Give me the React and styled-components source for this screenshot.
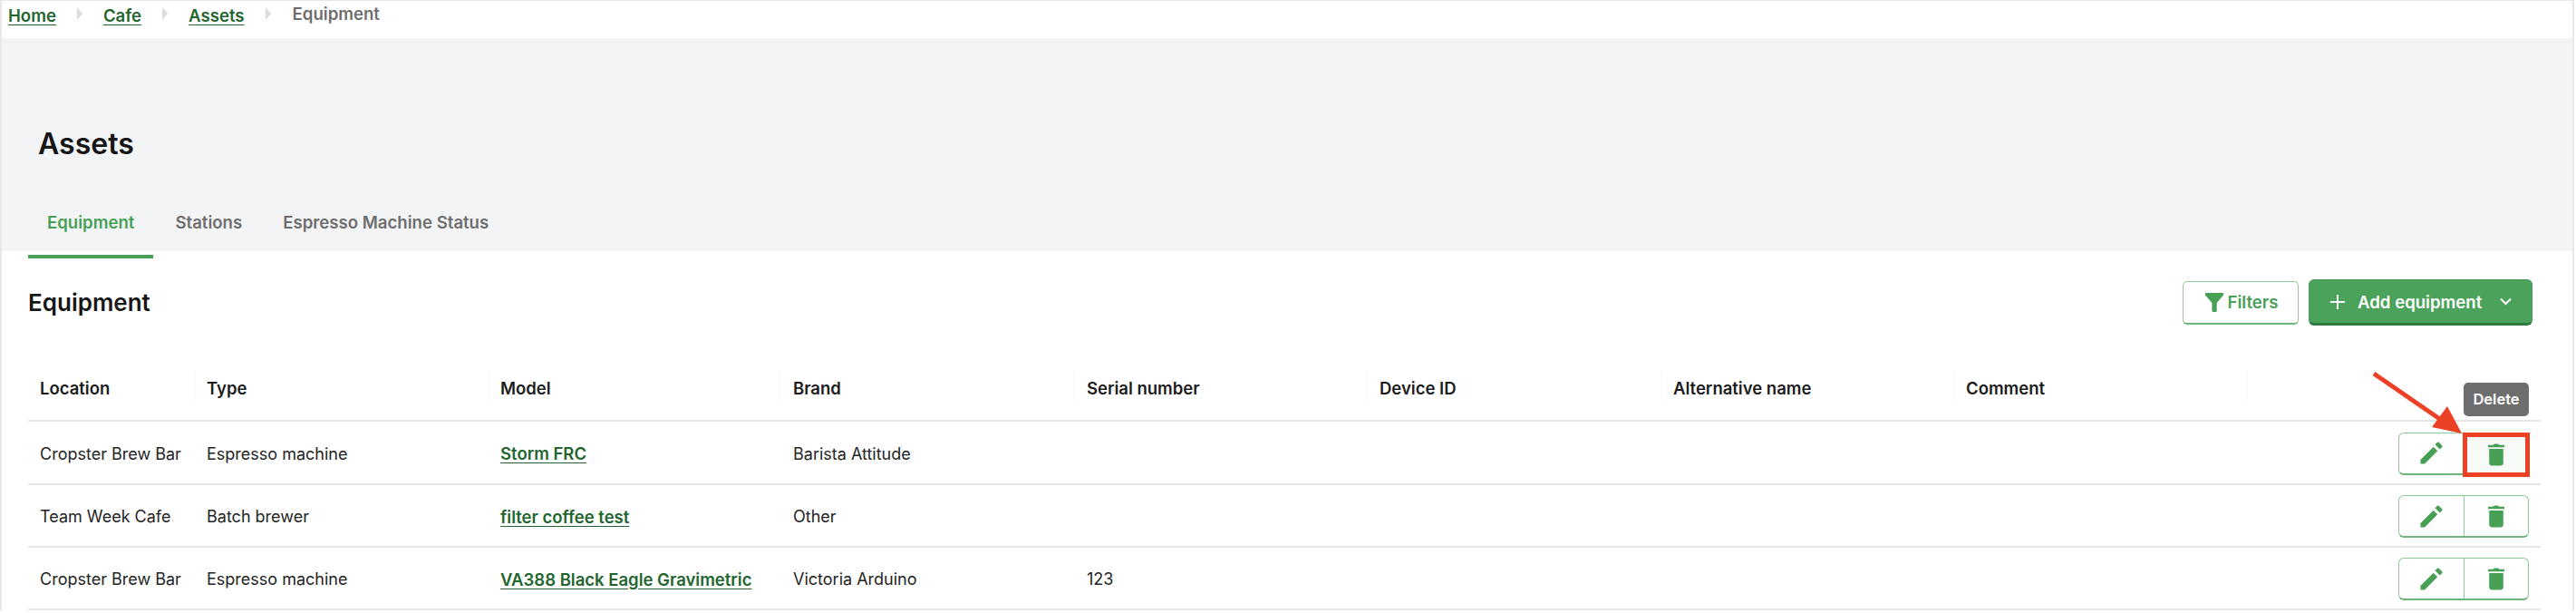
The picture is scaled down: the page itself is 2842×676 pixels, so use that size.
import styled, { createGlobalStyle } from "styled-components"

const GlobalStyle = createGlobalStyle`
  html, body {
    margin: 0;
    background: #fff;
  }
  * {
    box-sizing: border-box;
  }
`

const Page = styled.div`
  position: relative;
  width: 2842px;
  height: 676px;
  overflow: hidden;
  font-family: Inter, "Liberation Sans", sans-serif;
  color: #1c1c1c;
`

const Frame = styled.div`
  width: 2840px;
  height: 673px;
  border: 2px solid #e8e8e8;
  border-bottom: 0;
  border-top-width: 1px;
`

const Breadcrumbs = styled.nav`
  display: flex;
  align-items: center;
  height: 41px;
  padding: 0 0 9px 7px;
  font-size: 18.6px;
  font-weight: 600;
`

const Crumb = styled.a`
  color: #22652f;
  text-decoration: underline;
  text-underline-offset: 3px;
`

const CurrentCrumb = styled.span`
  color: #6e6e6e;
  margin: -4px 0 0 1px;
`

const CrumbArrow = styled.span`
  width: 0;
  height: 0;
  margin: -4px 23px 0;
  border-left: 6px solid #dcdcdc;
  border-top: 7px solid transparent;
  border-bottom: 7px solid transparent;
`

const Header = styled.header`
  height: 235px;
  padding: 93px 0 0 29px;
  background: #f3f4f6;
`

const Title = styled.h1`
  margin: 0 0 0 11px;
  font-size: 32px;
  line-height: 48px;
  font-weight: 600;
  color: #161616;
`

const Tabs = styled.div`
  display: flex;
  gap: 3px;
  margin-top: 32px;
`

const Tab = styled.div`
  height: 70px;
  padding: 0 21px;
  font-size: 18.6px;
  line-height: 60px;
  font-weight: 600;
  color: ${(p) => (p.$active ? "#47a056" : "#6e6e6e")};
  border-bottom: 4px solid ${(p) => (p.$active ? "#47a056" : "transparent")};
`

const Toolbar = styled.div`
  display: flex;
  align-items: center;
  justify-content: space-between;
  height: 113px;
  padding: 0 44px 0 29px;
`

const SectionTitle = styled.h2`
  margin: 0;
  font-size: 26px;
  font-weight: 600;
  color: #161616;
`

const Actions = styled.div`
  display: flex;
  align-items: center;
  gap: 11px;
`

const FilterButton = styled.button`
  display: flex;
  align-items: center;
  justify-content: center;
  gap: 5px;
  width: 128px;
  height: 48px;
  padding: 0 0 0 2px;
  font: 600 18.6px Inter, sans-serif;
  color: #47a056;
  background: #fff;
  border: 1px solid #8fc89a;
  border-bottom: 2px solid #6db57b;
  border-radius: 5px;
`

const AddButton = styled.button`
  display: flex;
  align-items: center;
  width: 247px;
  height: 51px;
  padding: 0 22px;
  font: 600 18.6px Inter, sans-serif;
  color: #fff;
  background: #4ba35b;
  border: 1px solid #47985a;
  border-bottom: 3px solid #2f7a3f;
  border-radius: 6px;
`

const AddLabel = styled.span`
  margin: 0 auto 0 13px;
`

const Table = styled.table`
  width: 2772px;
  margin-left: 29px;
  border-collapse: collapse;
  table-layout: fixed;
  font-size: 18px;
`

const HeadCell = styled.th`
  position: relative;
  height: 74px;
  padding: 3px 13px 0;
  text-align: left;
  font-size: 18.5px;
  font-weight: 600;
  color: #1c1c1c;
  border-bottom: 2px solid #e5e5e5;

  &::after {
    content: "";
    position: absolute;
    right: 0;
    top: 18px;
    height: 37px;
    border-right: 1px solid #fafafa;
  }
  &:last-child::after {
    display: none;
  }
`

const Cell = styled.td`
  height: ${(p) => p.$height}px;
  padding: 2px 13px 0;
  color: #242424;
  border-bottom: 2px solid #e5e5e5;
`

const ModelLink = styled.a`
  font-size: 18.5px;
  font-weight: 600;
  color: #22652f;
  text-decoration: underline;
  text-underline-offset: 3px;
`

const ButtonGroup = styled.div`
  display: flex;
  float: right;
  width: 144px;
  height: 47px;
  background: #fff;
  border: 1px solid #8fc89a;
  border-bottom: 2px solid #6db57b;
  border-radius: 6px;
`

const IconButton = styled.div`
  display: flex;
  flex: 1;
  align-items: center;
  justify-content: center;
  & + & {
    border-left: 1px solid #8fc89a;
  }
`

const Highlight = styled.div`
  position: absolute;
  left: 2717px;
  top: 477px;
  width: 74px;
  height: 49px;
  display: flex;
  align-items: center;
  justify-content: center;
  padding-right: 1px;
  background: #f7faf7;
  border: 5px solid #ec4125;
`

const Tooltip = styled.div`
  position: absolute;
  left: 2718px;
  top: 422px;
  width: 72px;
  height: 37px;
  font-size: 16.5px;
  font-weight: 600;
  line-height: 37px;
  text-align: center;
  color: #fff;
  background: #6e6e6e;
  border-radius: 5px;
`

const Arrow = styled.svg`
  position: absolute;
  left: 2610px;
  top: 405px;
`

const PencilIcon = () => (
  <svg width="29" height="29" viewBox="0 0 24 24" fill="#47a056">
    <path d="M2 18.2V22h3.8L17.6 10.2l-3.800-3.800L2 18.200z" />
    <path d="M21.700 6.600c.4-.4.4-1 0-1.400l-2.900-2.900c-.4-.4-1-.4-1.400 0l-2.100 2.100 4.300 4.300 2.100-2.100z" />
  </svg>
)

const TrashIcon = () => (
  <svg width="20" height="25" viewBox="0 0 20 25" fill="#47a056">
    <path d="M1 1.800h5.500C7 .8 8 .4 10 .4s3 .4 3.500 1.400H19v2.400H1z" />
    <path d="M2.200 6h15.600v15.500c0 2-1.300 3-3 3H5.200c-1.700 0-3-1-3-3z" />
  </svg>
)

const rows = [
  { location: "Cropster Brew Bar", type: "Espresso machine", model: "Storm FRC", brand: "Barista Attitude", serial: "", height: 70 },
  { location: "Team Week Cafe", type: "Batch brewer", model: "filter coffee test", brand: "Other", serial: "", height: 69 },
  { location: "Cropster Brew Bar", type: "Espresso machine", model: "VA388 Black Eagle Gravimetric", brand: "Victoria Arduino", serial: "123", height: 69 },
]

const columns = ["Location", "Type", "Model", "Brand", "Serial number", "Device ID", "Alternative name", "Comment"]
const widths = [184, 324, 323, 324, 323, 324, 323, 324, 323]

export default function App() {
  return (
    <Page>
      <GlobalStyle />
      <Frame>
        <Breadcrumbs>
          <Crumb>Home</Crumb>
          <CrumbArrow />
          <Crumb>Cafe</Crumb>
          <CrumbArrow />
          <Crumb>Assets</Crumb>
          <CrumbArrow />
          <CurrentCrumb>Equipment</CurrentCrumb>
        </Breadcrumbs>
        <Header>
          <Title>Assets</Title>
          <Tabs>
            <Tab $active>Equipment</Tab>
            <Tab>Stations</Tab>
            <Tab>Espresso Machine Status</Tab>
          </Tabs>
        </Header>
        <Toolbar>
          <SectionTitle>Equipment</SectionTitle>
          <Actions>
            <FilterButton>
              <svg width="20" height="21" viewBox="0 0 20 21" fill="#47a056">
                <path d="M0 0h20v2.500L12.700 11v8.500c0 1-.8 1.500-1.700 1.500H9.200c-1 0-1.800-.5-1.800-1.500V11L0 2.500z" />
              </svg>
              Filters
            </FilterButton>
            <AddButton>
              <svg width="18" height="18" viewBox="0 0 18 18" stroke="#fff" strokeWidth="2" fill="none">
                <path d="M9 1v16M1 9h16" />
              </svg>
              <AddLabel>Add equipment</AddLabel>
              <svg width="13" height="9" viewBox="0 0 13 9" stroke="#fff" strokeWidth="2" fill="none">
                <path d="M1 1.500l5.500 5.500 5.500-5.500" />
              </svg>
            </AddButton>
          </Actions>
        </Toolbar>
        <Table>
          <colgroup>
            {widths.map((w, i) => (
              <col key={i} width={w} />
            ))}
          </colgroup>
          <thead>
            <tr>
              {columns.map((c) => (
                <HeadCell key={c}>{c}</HeadCell>
              ))}
              <HeadCell />
            </tr>
          </thead>
          <tbody>
            {rows.map((r) => (
              <tr key={r.model}>
                <Cell $height={r.height}>{r.location}</Cell>
                <Cell $height={r.height}>{r.type}</Cell>
                <Cell $height={r.height}>
                  <ModelLink>{r.model}</ModelLink>
                </Cell>
                <Cell $height={r.height}>{r.brand}</Cell>
                <Cell $height={r.height}>{r.serial}</Cell>
                <Cell $height={r.height} />
                <Cell $height={r.height} />
                <Cell $height={r.height} />
                <Cell $height={r.height}>
                  <ButtonGroup>
                    <IconButton>
                      <PencilIcon />
                    </IconButton>
                    <IconButton>
                      <TrashIcon />
                    </IconButton>
                  </ButtonGroup>
                </Cell>
              </tr>
            ))}
          </tbody>
        </Table>
      </Frame>
      <Tooltip>Delete</Tooltip>
      <Highlight>
        <TrashIcon />
      </Highlight>
      <Arrow width="120" height="85" viewBox="0 0 120 85">
        <path d="M9 7L86 60" stroke="#ec4125" strokeWidth="5" fill="none" />
        <path d="M106 73L73 66L90 43z" fill="#ec4125" />
      </Arrow>
    </Page>
  )
}
